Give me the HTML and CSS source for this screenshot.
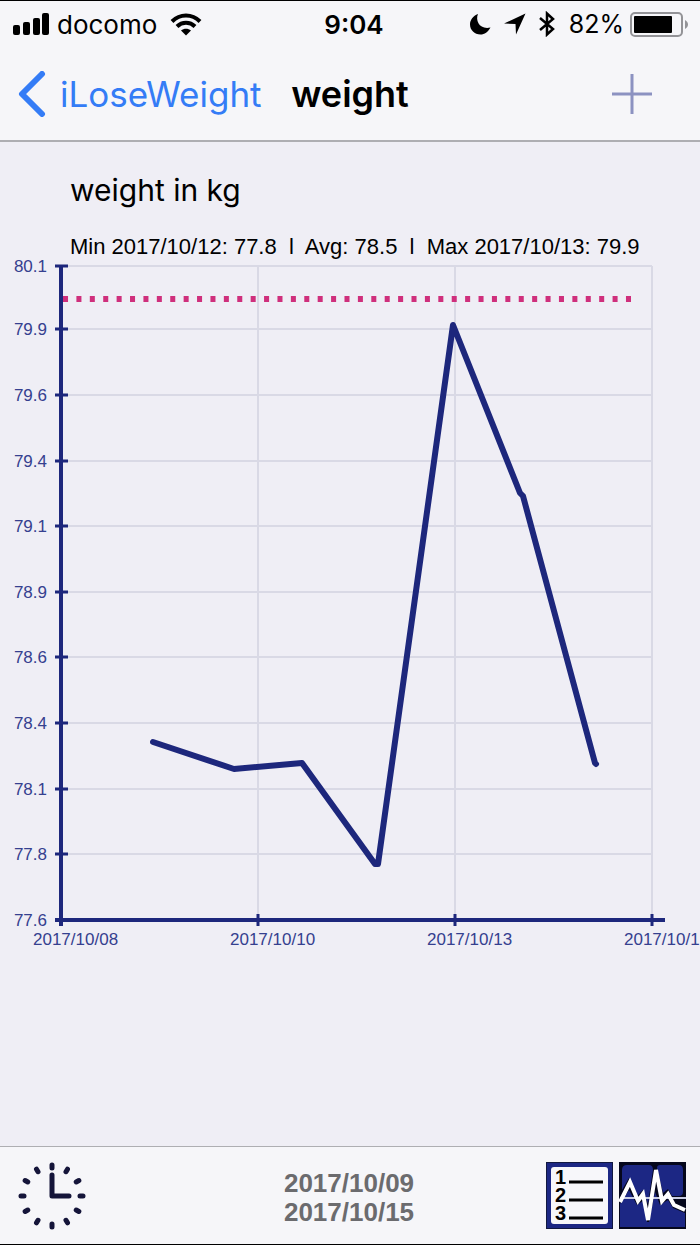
FILE: index.html
```html
<!DOCTYPE html>
<html lang="en">
<head>
    <meta charset="UTF-8">
    <meta name="viewport" content="width=device-width, initial-scale=1.0">
    <title>iLoseWeight - weight</title>
    <link rel="stylesheet" href="styles.css">
</head>
<body>
    <header>
        <div class="status-bar">
            <div class="status-left">
                <svg width="37" height="22" viewBox="0 0 37 22" aria-hidden="true">
                    <rect x="1" y="12" width="7" height="10" rx="2"/>
                    <rect x="11" y="9" width="7" height="13" rx="2"/>
                    <rect x="21" y="5" width="7" height="17" rx="2"/>
                    <rect x="30" y="0" width="7" height="22" rx="2"/>
                </svg>
                <span class="carrier">docomo</span>
                <svg width="32" height="23" viewBox="0 0 32 23" aria-hidden="true">
                    <path d="M2 8.500C10 .5 22 .5 30 8.500M7 13.500C12 8.600 20 8.600 25 13.500" fill="none" stroke="#000" stroke-width="4"/>
                    <path d="M11 17.500C14 15 18 15 21 17.500L16 22.500Z"/>
                </svg>
            </div>
            <time class="clock-time">9:04</time>
            <div class="status-right">
                <svg class="moon" width="21" height="21" viewBox="0 0 21 21" aria-hidden="true">
                    <path d="M8 0C5 7 10 16 20.500 13.500C18 18 14.500 20.500 10.500 20.500C4.500 20.500 0 16 0 10.500C0 6 3 2 8 0Z"/>
                </svg>
                <svg class="arrow" width="22" height="22" viewBox="0 0 22 22" aria-hidden="true">
                    <path d="M21.500 .5L12 21.500L11.500 11L0 10.500Z"/>
                </svg>
                <svg class="bluetooth" width="16" height="26" viewBox="0 0 16 26" aria-hidden="true">
                    <path d="M1 7L14 18L8 23.500V2.500L14 8L1 19" fill="none" stroke="#000" stroke-width="2.500"/>
                </svg>
                <span class="percent">82%</span>
                <svg width="58" height="25" viewBox="0 0 58 25" aria-hidden="true">
                    <rect x="1" y="1" width="51" height="23" rx="4" fill="none" stroke="#939397" stroke-width="2"/>
                    <rect x="4" y="4" width="38" height="17" rx="1"/>
                    <path d="M55 8C59 10 59 15 55 17Z" fill="#939397"/>
                </svg>
            </div>
        </div>
        <nav>
            <a class="back" href="#">
                <svg width="28" height="46" viewBox="0 0 28 46" aria-hidden="true">
                    <path d="M24 3L4 23L24 43" fill="none" stroke="#347cf6" stroke-width="6" stroke-linecap="round" stroke-linejoin="round"/>
                </svg>
                <span>iLoseWeight</span>
            </a>
            <h1>weight</h1>
            <button class="add" aria-label="Add weight">
                <svg width="40" height="40" viewBox="0 0 40 40" aria-hidden="true">
                    <path d="M20 0V40M0 20H40" stroke="#8c92c1" stroke-width="3"/>
                </svg>
            </button>
        </nav>
    </header>
    <main>
        <h2>weight in kg</h2>
        <p class="summary">Min 2017/10/12: 77.8  l  Avg: 78.5  l  Max 2017/10/13: 79.9</p>
        <svg class="chart" viewBox="0 0 700 700" role="img" aria-label="Weight from 2017/10/09 to 2017/10/15">
            <path class="grid" d="M61 9H652M61 72H652M61 138H652M61 204H652M61 269H652M61 335H652M61 400H652M61 466H652M61 532H652M61 597H652M258 9V663M455 9V663M652 9V663"/>
            <!-- target weight -->
            <path class="goal" pathLength="339" d="M63 42H631"/>
            <path class="axis" d="M61 8V669M55 663H665"/>
            <path class="ticks" d="M55 9H68M55 72H68M55 138H68M55 204H68M55 269H68M55 335H68M55 400H68M55 466H68M55 532H68M55 597H68M258 657V669M455 657V669M652 657V669"/>
            <polyline class="line" points="153,485 234,512 302,506 375,607 378,607 453,68 520,236 523,239 595,506 596,507"/>
            <g class="y-labels">
                <text x="47" y="15">80.1</text>
                <text x="47" y="78">79.9</text>
                <text x="47" y="144">79.6</text>
                <text x="47" y="210">79.4</text>
                <text x="47" y="275">79.1</text>
                <text x="47" y="341">78.9</text>
                <text x="47" y="406">78.6</text>
                <text x="47" y="472">78.4</text>
                <text x="47" y="538">78.1</text>
                <text x="47" y="603">77.8</text>
                <text x="47" y="669">77.6</text>
            </g>
            <g class="x-labels">
                <text x="33" y="688">2017/10/08</text>
                <text x="230" y="688">2017/10/10</text>
                <text x="427" y="688">2017/10/13</text>
                <text x="624" y="688">2017/10/15</text>
            </g>
        </svg>
    </main>
    <footer>
        <button class="history" aria-label="Time range">
            <svg width="68" height="68" viewBox="-34 -34 68 68" aria-hidden="true">
                <g fill="none" stroke="#15153a" stroke-width="5" stroke-linecap="round">
                    <path d="M0 -31V-28M0 28V31M-31 0H-28M28 0H31"/>
                    <path d="M0 -31V-28M0 28V31M-31 0H-28M28 0H31" transform="rotate(30)"/>
                    <path d="M0 -31V-28M0 28V31M-31 0H-28M28 0H31" transform="rotate(60)"/>
                    <path d="M0 -21V0H17" stroke-linejoin="round"/>
                </g>
            </svg>
        </button>
        <p class="range">2017/10/09<br>2017/10/15</p>
        <div class="views">
            <button aria-label="List">
                <svg width="67" height="67" viewBox="0 0 67 67" aria-hidden="true">
                    <rect width="67" height="67" fill="#111840"/>
                    <rect x="1" y="1" width="65" height="65" fill="#1c2784"/>
                    <rect x="5" y="5" width="57" height="57" rx="3" fill="#f7f7fa"/>
                    <path d="M23 20H57M23 38H57M23 56H57" stroke="#000" stroke-width="3"/>
                    <g class="list-numbers">
                        <text x="9" y="22">1</text>
                        <text x="9" y="40">2</text>
                        <text x="9" y="58">3</text>
                    </g>
                </svg>
            </button>
            <button aria-label="Chart">
                <svg width="67" height="67" viewBox="0 0 67 67" aria-hidden="true">
                    <rect width="67" height="67" fill="#05071c"/>
                    <path d="M3 8Q3 3 8 3H30Q34 3 34 8L29 42L24 28L18 34L10 16L3 28ZM38 6Q38 3 41 3H60Q64 3 64 8V30Q64 34 60 34H53L49 27L44 31L38 6ZM1 42L10 28L18 43L25 38L28 60L30 60L36 30L41 43L49 38L54 46L66 51V65H1Z" fill="#1c2784"/>
                    <path d="M1 36H67" stroke="#c7cbe2" stroke-width="2"/>
                    <path d="M1 40L11 20L19 39L24 32L29 58L37 8L43 39L49 32L55 43L66 48" fill="none" stroke="#fff" stroke-width="4"/>
                </svg>
            </button>
        </div>
    </footer>
</body>
</html>
```
FILE: styles.css
```css
* {
    box-sizing: border-box;
}

body {
    font-family: Inter, "Liberation Sans", sans-serif;
    margin: 0;
    min-height: 100vh;
    display: flex;
    flex-direction: column;
    background-color: #efeef5; /* Light gray background */
    color: #000;
    border-top: 1px solid #000;
    border-bottom: 1px solid #000;
}

button {
    padding: 0;
    border: none;
    background: none;
    cursor: pointer;
}

svg {
    display: block;
    flex-shrink: 0;
}

header {
    background-color: #f6f6f9;
    border-bottom: 2px solid #aeaeb2;
}

.status-bar {
    display: grid;
    grid-template-columns: 1fr auto 1fr;
    align-items: center;
    height: 46px;
    padding: 0 12px;
    font-size: 26px;
}

.status-left,
.status-right {
    display: flex;
    align-items: center;
}

.status-right {
    justify-content: flex-end;
}

.carrier {
    margin: 0 13px 0 8px;
}

.clock-time {
    padding-left: 8px;
    font-weight: 600;
}

.arrow {
    margin: 0 13px;
}

.percent {
    margin: 0 6px 0 14px;
    font-size: 25px;
}

nav {
    display: grid;
    grid-template-columns: 1fr auto 1fr;
    align-items: center;
    height: 93px;
    padding: 0 18px;
}

.back {
    display: flex;
    align-items: center;
    gap: 14px;
    color: #347cf6; /* Blue */
    font-size: 35px;
    text-decoration: none;
}

h1 {
    margin: 0;
    font-size: 36px;
    font-weight: 600;
}

.add {
    justify-self: end;
    margin-right: 30px;
}

main {
    flex: 1;
}

h2 {
    margin: 0;
    padding: 28px 70px 0;
    font-size: 30px;
    line-height: 40px;
    font-weight: 400;
}

.summary {
    margin: 0;
    padding: 26px 0 0 70px;
    font-family: "Liberation Sans", Arial, sans-serif;
    font-size: 22px;
    line-height: 21px;
    white-space: pre;
}

.chart {
    width: 100%;
    height: auto;
    font-family: "Liberation Sans", Arial, sans-serif;
    font-size: 17px;
}

.chart text {
    fill: #35408f;
}

.grid {
    fill: none;
    stroke: #d9d9e5;
    stroke-width: 2;
}

.goal {
    fill: none;
    stroke: #cf2f7c; /* Pink */
    stroke-width: 6;
    stroke-dasharray: 3 5;
}

.axis,
.ticks {
    fill: none;
    stroke: #1d277c; /* Navy */
    stroke-width: 4;
}

.ticks {
    stroke-width: 3;
}

.line {
    fill: none;
    stroke: #1d277c;
    stroke-width: 6;
    stroke-linecap: round;
    stroke-linejoin: round;
}

.y-labels {
    text-anchor: end;
}

footer {
    display: grid;
    grid-template-columns: 1fr auto 1fr;
    align-items: center;
    height: 98px;
    padding: 0 14px;
    background-color: #f6f6f9;
    border-top: 1px solid #aeaeb2;
}

.history {
    justify-self: start;
    margin-left: 4px;
}

.range {
    margin: 0;
    padding: 4px 2px 0 0;
    font-family: "Liberation Sans", Arial, sans-serif;
    font-size: 26px;
    line-height: 29px;
    font-weight: bold;
    color: #6b6b6e; /* Dark gray text */
}

.views {
    display: flex;
    justify-content: flex-end;
    gap: 6px;
}

.list-numbers {
    font-family: "Liberation Sans", Arial, sans-serif;
    font-size: 20px;
    font-weight: bold;
}
```
